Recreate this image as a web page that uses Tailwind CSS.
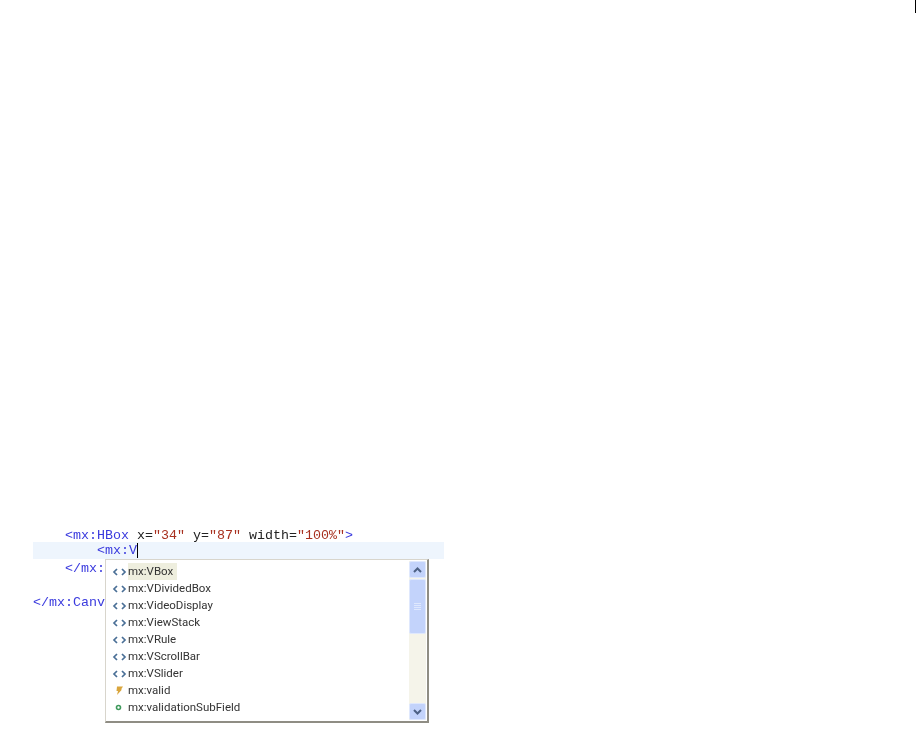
<!DOCTYPE html>
<html>
<head>
<meta charset="utf-8">
<title>Code hints</title>
<script src="https://cdn.jsdelivr.net/npm/@tailwindcss/browser@4"></script>
</head>
<body class="bg-white">
<div class="relative w-[916px] h-[734px] overflow-hidden bg-white">
    <!-- page edge mark, top right -->
    <div class="absolute right-0 top-0 w-px h-[13px] bg-black"></div>

    <!-- editor -->
    <div class="pt-[527px] pl-[33px] w-[444px] font-['Liberation_Mono',monospace] text-[13.33px] whitespace-nowrap text-[#222] blur-[0.3px]">
        <div class="h-[15px] leading-[18px] pl-[32px]"><span class="text-[#3a3ade]">&lt;mx:HBox</span> x=<span class="text-[#a8301f]">"34"</span> y=<span class="text-[#a8301f]">"87"</span> width=<span class="text-[#a8301f]">"100%"</span><span class="text-[#3a3ade]">&gt;</span></div>
        <div class="h-[17px] leading-[18px] bg-[#eef5fd] pl-[64px] flex"><span class="text-[#3a3ade]">&lt;mx:V</span><span class="w-px h-[15px] mt-px bg-black"></span></div>
        <div class="h-[17px] leading-[19px] pl-[32px] text-[#3a3ade]">&lt;/mx:</div>
        <div class="h-[17px]"></div>
        <div class="h-[17px] leading-[20px] text-[#3a3ade]">&lt;/mx:Canv</div>
    </div>

    <!-- hint popup -->
    <div class="absolute left-[105px] top-[559px] w-[324px] h-[164px] bg-white border border-[#d8d5cc] border-r-2 border-b-2 border-r-[#8f8d84] border-b-[#8f8d84] flex font-['Roboto',sans-serif] text-[11.5px] text-[#333] blur-[0.3px]">
        <div class="flex-1 pt-[3px] pl-[6px] flex flex-col">
            <div class="h-[17px] flex items-center">
                <svg class="w-[16px] h-[10px]" viewBox="0 0 16 10" fill="none" stroke="#4a6f96" stroke-width="1.7"><path d="M5 2 L2 5 L5 8 M10 2 L13 5 L10 8"/></svg>
                <span class="bg-[#eeeede] h-[17px] leading-[17px] pr-[4px]">mx:VBox</span>
            </div>
            <div class="h-[17px] flex items-center">
                <svg class="w-[16px] h-[10px]" viewBox="0 0 16 10" fill="none" stroke="#4a6f96" stroke-width="1.7"><path d="M5 2 L2 5 L5 8 M10 2 L13 5 L10 8"/></svg>
                <span>mx:VDividedBox</span>
            </div>
            <div class="h-[17px] flex items-center">
                <svg class="w-[16px] h-[10px]" viewBox="0 0 16 10" fill="none" stroke="#4a6f96" stroke-width="1.7"><path d="M5 2 L2 5 L5 8 M10 2 L13 5 L10 8"/></svg>
                <span>mx:VideoDisplay</span>
            </div>
            <div class="h-[17px] flex items-center">
                <svg class="w-[16px] h-[10px]" viewBox="0 0 16 10" fill="none" stroke="#4a6f96" stroke-width="1.7"><path d="M5 2 L2 5 L5 8 M10 2 L13 5 L10 8"/></svg>
                <span>mx:ViewStack</span>
            </div>
            <div class="h-[17px] flex items-center">
                <svg class="w-[16px] h-[10px]" viewBox="0 0 16 10" fill="none" stroke="#4a6f96" stroke-width="1.7"><path d="M5 2 L2 5 L5 8 M10 2 L13 5 L10 8"/></svg>
                <span>mx:VRule</span>
            </div>
            <div class="h-[17px] flex items-center">
                <svg class="w-[16px] h-[10px]" viewBox="0 0 16 10" fill="none" stroke="#4a6f96" stroke-width="1.7"><path d="M5 2 L2 5 L5 8 M10 2 L13 5 L10 8"/></svg>
                <span>mx:VScrollBar</span>
            </div>
            <div class="h-[17px] flex items-center">
                <svg class="w-[16px] h-[10px]" viewBox="0 0 16 10" fill="none" stroke="#4a6f96" stroke-width="1.7"><path d="M5 2 L2 5 L5 8 M10 2 L13 5 L10 8"/></svg>
                <span>mx:VSlider</span>
            </div>
            <div class="h-[17px] flex items-center">
                <svg class="w-[16px] h-[10px]" viewBox="0 0 16 10"><path d="M5 0.5 H11 L9 3.5 H10 L5 9 L6 5 H4.5 Z" fill="#d9a53c"/></svg>
                <span>mx:valid</span>
            </div>
            <div class="h-[17px] flex items-center">
                <svg class="w-[16px] h-[10px]" viewBox="0 0 16 10" fill="none" stroke="#3f9a5c" stroke-width="1.6"><circle cx="6.5" cy="4.5" r="2"/></svg>
                <span>mx:validationSubField</span>
            </div>
        </div>

        <!-- scrollbar -->
        <div class="w-[17px] mt-[1px] mr-[1px] mb-[1px] bg-[#f5f4ea] flex flex-col">
            <div class="h-[17px] rounded-[2px] bg-[#c3d3fb] border border-[#dfe8fd] flex items-center justify-center">
                <svg class="w-[9px] h-[6px]" viewBox="0 0 9 6" fill="none" stroke="#4d6185" stroke-width="2"><path d="M1 5 L4.5 1.5 L8 5"/></svg>
            </div>
            <div class="h-[55px] mt-[1px] rounded-[2px] bg-[#c3d3fb] border border-[#dfe8fd] flex flex-col items-center justify-center gap-px">
                <div class="w-[7px] h-px bg-[#dfe8fd]"></div>
                <div class="w-[7px] h-px bg-[#dfe8fd]"></div>
                <div class="w-[7px] h-px bg-[#dfe8fd]"></div>
                <div class="w-[7px] h-px bg-[#dfe8fd]"></div>
            </div>
            <div class="flex-1"></div>
            <div class="h-[17px] rounded-[2px] bg-[#c3d3fb] border border-[#dfe8fd] flex items-center justify-center">
                <svg class="w-[9px] h-[6px]" viewBox="0 0 9 6" fill="none" stroke="#4d6185" stroke-width="2"><path d="M1 1 L4.5 4.5 L8 1"/></svg>
            </div>
        </div>
    </div>
</div>
</body>
</html>
